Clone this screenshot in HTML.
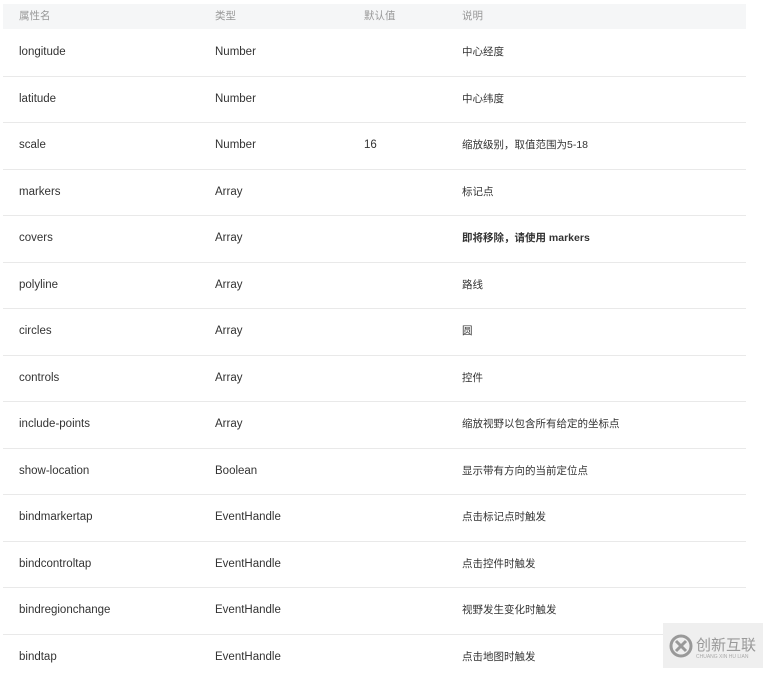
<!DOCTYPE html>
<html><head><meta charset="utf-8"><style>
body{margin:0;width:763px;height:668px;overflow:hidden;background:#fff;font-family:"Liberation Sans","Noto Sans CJK SC",sans-serif;font-size:11.5px;color:#333;position:relative}
.hd{position:absolute;left:3px;top:4px;width:743px;height:25px;background:#f5f6f7;color:#999;font-size:10.5px}
.hd span,.r span{position:absolute;line-height:14px;white-space:nowrap}
.hd span{top:5px}
.r{position:absolute;left:3px;width:743px;height:46.5px;border-bottom:1px solid #e9e9e9}
.r span{top:16px}
.c1{left:16px}.c2{left:212px}.c3{left:361px}.c4{left:459px;font-size:10.5px}
.wm{position:absolute;left:663px;top:623px;width:100px;height:45px;background:#efefef}
</style></head><body>
<div class="hd"><span class="c1">属性名</span><span class="c2">类型</span><span class="c3">默认值</span><span class="c4">说明</span></div>
<div class="r" style="top:29px"><span class="c1">longitude</span><span class="c2">Number</span><span class="c4">中心经度</span></div>
<div class="r" style="top:75.5px"><span class="c1">latitude</span><span class="c2">Number</span><span class="c4">中心纬度</span></div>
<div class="r" style="top:122px"><span class="c1">scale</span><span class="c2">Number</span><span class="c3">16</span><span class="c4">缩放级别，取值范围为5-18</span></div>
<div class="r" style="top:168.5px"><span class="c1">markers</span><span class="c2">Array</span><span class="c4">标记点</span></div>
<div class="r" style="top:215px"><span class="c1">covers</span><span class="c2">Array</span><span class="c4" style="font-weight:bold">即将移除，请使用 markers</span></div>
<div class="r" style="top:261.5px"><span class="c1">polyline</span><span class="c2">Array</span><span class="c4">路线</span></div>
<div class="r" style="top:308px"><span class="c1">circles</span><span class="c2">Array</span><span class="c4">圆</span></div>
<div class="r" style="top:354.5px"><span class="c1">controls</span><span class="c2">Array</span><span class="c4">控件</span></div>
<div class="r" style="top:401px"><span class="c1">include-points</span><span class="c2">Array</span><span class="c4">缩放视野以包含所有给定的坐标点</span></div>
<div class="r" style="top:447.5px"><span class="c1">show-location</span><span class="c2">Boolean</span><span class="c4">显示带有方向的当前定位点</span></div>
<div class="r" style="top:494px"><span class="c1">bindmarkertap</span><span class="c2">EventHandle</span><span class="c4">点击标记点时触发</span></div>
<div class="r" style="top:540.5px"><span class="c1">bindcontroltap</span><span class="c2">EventHandle</span><span class="c4">点击控件时触发</span></div>
<div class="r" style="top:587px"><span class="c1">bindregionchange</span><span class="c2">EventHandle</span><span class="c4">视野发生变化时触发</span></div>
<div class="r" style="top:633.5px;border:0"><span class="c1">bindtap</span><span class="c2">EventHandle</span><span class="c4">点击地图时触发</span></div>
<div class="wm"><svg width="24" height="24" style="position:absolute;left:6px;top:11px" viewBox="0 0 24 24"><circle cx="12" cy="12" r="10" fill="none" stroke="#999" stroke-width="3"/><path d="M7 7L17 17M17 7L7 17" stroke="#999" stroke-width="3"/></svg><span style="position:absolute;left:33px;top:11px;font-size:15px;color:#999">创新互联</span><span style="position:absolute;left:33px;top:31px;font-size:5px;color:#aaa">CHUANG XIN HU LIAN</span></div>
</body></html>
